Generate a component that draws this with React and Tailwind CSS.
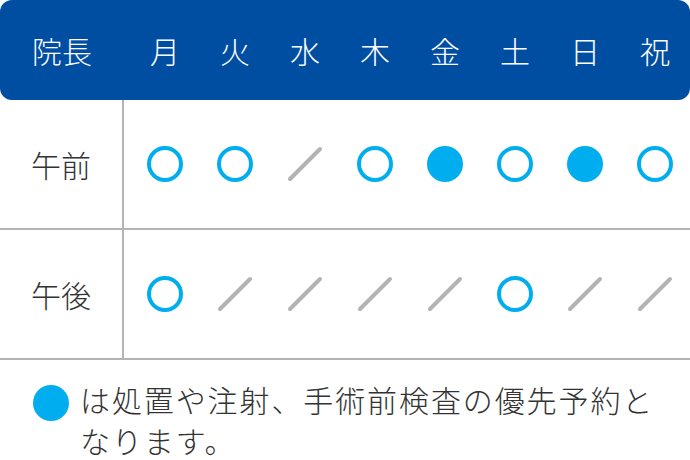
import React from "react";

const days = ["月", "火", "水", "木", "金", "土", "日", "祝"];
const am = ["o", "o", "x", "o", "f", "o", "f", "o"];
const pm = ["o", "x", "x", "x", "x", "o", "x", "x"];

function Mark({ t }) {
  if (t === "o")
    return <div className="w-[36px] h-[36px] rounded-full border-[4px] border-[#00aeef] box-border" />;
  if (t === "f") return <div className="w-[36px] h-[36px] rounded-full bg-[#00aeef]" />;
  return (
    <svg width="36" height="36" viewBox="0 0 36 36">
      <line x1="3" y1="33" x2="33" y2="3" stroke="#b3b3b3" strokeWidth="4" strokeLinecap="round" />
    </svg>
  );
}

function Row({ label, data }) {
  return (
    <div className="h-[130px] flex border-b-2 border-[#b3b3b3]">
      <div className="w-[122px] border-r-2 border-[#b3b3b3] box-content flex items-center justify-center text-[30px] text-[#333] font-light">
        {label}
      </div>
      <div className="flex pl-[6px]">
        {data.map((t, i) => (
          <div key={i} className="w-[70px] flex items-center justify-center">
            <Mark t={t} />
          </div>
        ))}
      </div>
    </div>
  );
}

export default function App() {
  return (
    <div
      className="w-[690px] h-[460px] bg-white overflow-hidden"
      style={{ fontFamily: '"Noto Sans CJK JP", "Noto Sans", sans-serif' }}
    >
      <div className="h-[100px] bg-[#004ea2] rounded-[12px] flex items-center text-white text-[30px] font-light">
        <div className="w-[124px] text-center">院長</div>
        <div className="flex pl-[6px]">
          {days.map((d) => (
            <div key={d} className="w-[70px] text-center">{d}</div>
          ))}
        </div>
      </div>
      <Row label="午前" data={am} />
      <Row label="午後" data={pm} />
      <div className="flex pl-[33px] pt-[24px]">
        <div className="w-[36px] h-[36px] rounded-full bg-[#00aeef] shrink-0 mt-[1px]" />
        <div className="ml-[11px] text-[30px] leading-[41px] tracking-[1.9px] text-[#333] font-light -mt-[5px]">
          は処置や注射、手術前検査の優先予約と
          <br />
          なります。
        </div>
      </div>
    </div>
  );
}
